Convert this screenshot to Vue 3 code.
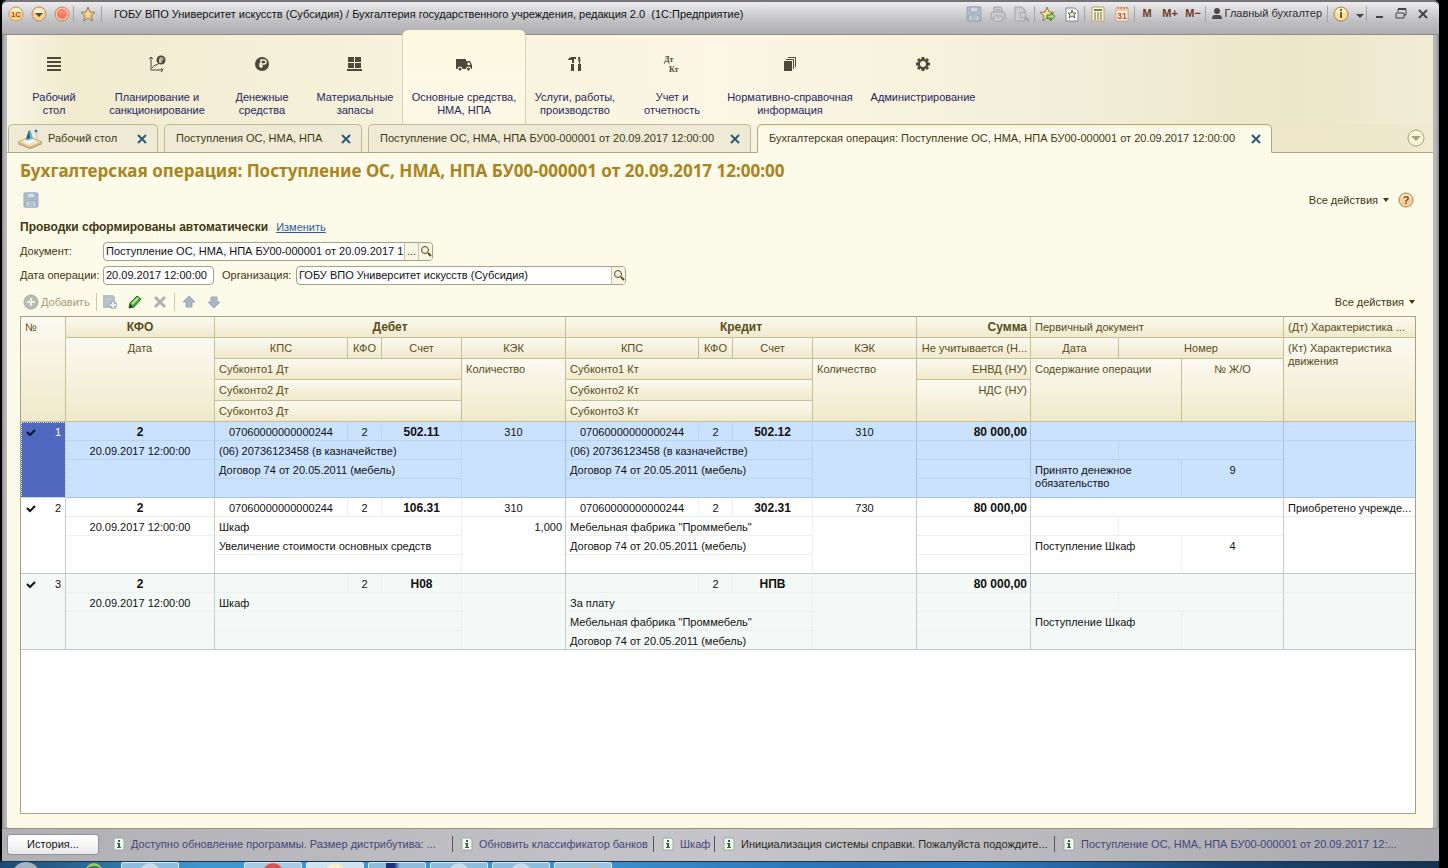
<script setup>
import { ref } from 'vue'

const sections = [
  { icon: 'desk', lines: ['Рабочий', 'стол'] },
  { icon: 'plan', lines: ['Планирование и', 'санкционирование'] },
  { icon: 'money', lines: ['Денежные', 'средства'] },
  { icon: 'stock', lines: ['Материальные', 'запасы'] },
  { icon: 'truck', lines: ['Основные средства,', 'НМА, НПА'], active: true },
  { icon: 'tools', lines: ['Услуги, работы,', 'производство'] },
  { icon: 'dtkt', lines: ['Учет и', 'отчетность'] },
  { icon: 'books', lines: ['Нормативно-справочная', 'информация'] },
  { icon: 'gear', lines: ['Администрирование'] }
]

const tabs = [
  { cls: 'tab-home', text: 'Рабочий стол', home: true },
  { cls: 'tab-list', text: 'Поступления ОС, НМА, НПА' },
  { cls: 'tab-doc', text: 'Поступление ОС, НМА, НПА БУ00-000001 от 20.09.2017 12:00:00' },
  { cls: 'tab-oper', text: 'Бухгалтерская операция: Поступление ОС, НМА, НПА БУ00-000001 от 20.09.2017 12:00:00', active: true }
]

const docName = ref('Поступление ОС, НМА, НПА БУ00-000001 от 20.09.2017 1')
const docDate = ref('20.09.2017 12:00:00')
const org = ref('ГОБУ ВПО Университет искусств (Субсидия)')

const rows = [
  {
    n: 1, selected: true, date: '20.09.2017 12:00:00', sum: '80 000,00',
    dt: { kps: '07060000000000244', kfo: '2', acc: '502.11', kek: '310', qty: '', sub: ['(06) 20736123458 (в казначействе)', 'Договор 74 от 20.05.2011 (мебель)', ''] },
    kt: { kps: '07060000000000244', kfo: '2', acc: '502.12', kek: '310', qty: '', sub: ['(06) 20736123458 (в казначействе)', 'Договор 74 от 20.05.2011 (мебель)', ''] },
    text: 'Принято денежное обязательство', jo: '9', feature: ''
  },
  {
    n: 2, date: '20.09.2017 12:00:00', sum: '80 000,00',
    dt: { kps: '07060000000000244', kfo: '2', acc: '106.31', kek: '310', qty: '1,000', sub: ['Шкаф', 'Увеличение стоимости основных средств', ''] },
    kt: { kps: '07060000000000244', kfo: '2', acc: '302.31', kek: '730', qty: '', sub: ['Мебельная фабрика "Проммебель"', 'Договор 74 от 20.05.2011 (мебель)', ''] },
    text: 'Поступление Шкаф', jo: '4', feature: 'Приобретено учрежде...'
  },
  {
    n: 3, even: true, date: '20.09.2017 12:00:00', sum: '80 000,00',
    dt: { kps: '', kfo: '2', acc: 'Н08', kek: '', qty: '', sub: ['Шкаф', '', ''] },
    kt: { kps: '', kfo: '2', acc: 'НПВ', kek: '', qty: '', sub: ['За плату', 'Мебельная фабрика "Проммебель"', 'Договор 74 от 20.05.2011 (мебель)'] },
    text: 'Поступление Шкаф', jo: '', feature: ''
  }
]

const notes = [
  { cls: 'note-long', text: 'Доступно обновление программы. Размер дистрибутива: ...' },
  { cls: 'note-bank', text: 'Обновить классификатор банков' },
  { cls: 'note-item', text: 'Шкаф' },
  { cls: 'note-help', text: 'Инициализация системы справки. Пожалуйста подождите...', dark: true },
  { cls: 'note-last', text: 'Поступление ОС, НМА, НПА БУ00-000001 от 20.09.2017 12:...' }
]
</script>

<template>
  <div class="screen">
    <div class="window">
      <header class="titlebar">
        <button class="tb w23" aria-label="Главное меню">
          <svg width="16" height="16" viewBox="0 0 16 16"><circle cx="8" cy="8" r="7" fill="#fbd98a" stroke="#c79a6c" /><ellipse cx="8" cy="5" rx="5" ry="3" fill="#fff3c4" /><text x="8" y="11" text-anchor="middle" class="logo-text">1С</text></svg>
        </button>
        <button class="tb w23" aria-label="Меню">
          <svg width="16" height="16" viewBox="0 0 16 16"><circle cx="8" cy="8" r="7" fill="#f3cf94" stroke="#b98f63" /><ellipse cx="8" cy="5" rx="5" ry="3" fill="#fdeccb" /><path d="M4 7h8l-4 4z" fill="#5c4a35" /></svg>
        </button>
        <button class="tb w23" aria-label="Закрыть">
          <svg width="16" height="16" viewBox="0 0 16 16"><circle cx="8" cy="8" r="7" fill="#f9c7a5" stroke="#b98672" /><circle cx="8" cy="8" r="5" fill="#f2795b" /><ellipse cx="8" cy="6" rx="4" ry="2" fill="#f59075" /></svg>
        </button>
        <i class="sep"></i>
        <button class="tb w26" aria-label="Избранное">
          <svg width="16" height="16" viewBox="0 0 16 16"><path d="M8 1l2 5 5 .4-4 3.4 1.400 5.200L8 12l-4.400 3L5 9.800 1 6.400 6 6z" fill="#fbd58b" stroke="#8d7a5c" /></svg>
        </button>
        <i class="sep"></i>
        <h1 class="app-title">ГОБУ ВПО Университет искусств (Субсидия) / Бухгалтерия государственного учреждения, редакция 2.0&nbsp; (1С:Предприятие)</h1>
        <div class="tb-right">
          <button class="tb" aria-label="Сохранить">
            <svg width="16" height="16" viewBox="0 0 16 16"><path d="M1 1h14v14H1z" fill="#b5bfcb" stroke="#97a3b1" /><path d="M4 1h8v5H4zM3 9h10v6H3z" fill="#d0d7dd" stroke="#94a1af" /><path d="M5 11h6M5 13h6" stroke="#94a1af" /></svg>
          </button>
          <button class="tb" aria-label="Печать">
            <svg width="16" height="16" viewBox="0 0 16 16" stroke="#a3a3a6" fill="#cbcbcd"><path d="M4 7V1h7l1 2v4" /><path d="M2 6h12l1 2v5H1V8z" /><path d="M4 10h8v5H4z" fill="#dadadc" /><path d="M6 4h4M6 12h4" /></svg>
          </button>
          <button class="tb" aria-label="Предварительный просмотр">
            <svg width="16" height="16" viewBox="0 0 16 16" stroke="#a2a2a9" fill="#cccccf"><path d="M1 1h7l3 3v11H1z" /><circle cx="9" cy="9" r="3" /><path d="M11 11l4 4" stroke-width="2" /></svg>
          </button>
          <i class="sep"></i>
          <button class="tb" aria-label="Добавить в избранное">
            <svg width="16" height="16" viewBox="0 0 16 16"><path d="M7 1l2 5 5 .4-4 3.400 1 5.200L7 12l-4 3 1-5.200L0 6.400 5 6z" fill="#fbe28b" stroke="#8b7a55" /><path d="M7 9h4V7l4 3.500L11 14v-2H7z" fill="#b5e07a" stroke="#3d7a24" /></svg>
          </button>
          <button class="tb" aria-label="Избранные страницы">
            <svg width="14" height="16" viewBox="0 0 14 16"><path d="M1 2h9l3 3v10H1z" fill="#fff" stroke="#7d8490" /><path d="M7 4l1 3h3l-2 2 1 3-3-2-3 2 1-3-2-2h3z" fill="#e8efc0" stroke="#5d6a4c" /></svg>
          </button>
          <i class="sep"></i>
          <button class="tb" aria-label="Калькулятор">
            <svg width="14" height="16" viewBox="0 0 14 16"><path d="M1 1h12v14H1z" fill="#fdf8dc" stroke="#bf9f6c" /><path d="M3 4h8" stroke="#6d8a4a" stroke-width="2" /><path d="M3 7h8M3 9h8M3 11h8M3 13h8" stroke="#66603c" stroke-dasharray="2 1" /></svg>
          </button>
          <button class="tb" aria-label="Календарь">
            <svg width="14" height="16" viewBox="0 0 14 16"><path d="M1 2h12v13H1z" fill="#fff6e6" stroke="#c99d72" /><path d="M1 2h12v3H1z" fill="#f6c9a0" /><path d="M3 1v2M6 1v2M9 1v2M12 1v2" stroke="#c2603c" /><text x="7" y="13" text-anchor="middle" class="cal-text">31</text></svg>
          </button>
          <i class="sep"></i>
          <button class="tb mem">M</button>
          <button class="tb mem">M+</button>
          <button class="tb mem">M−</button>
          <i class="sep"></i>
          <button class="tb user">
            <svg width="10" height="12" viewBox="0 0 10 12" fill="#4b4b4f"><circle cx="5" cy="3" r="3" /><path d="M0 11q0-4 3-4h4q3 0 3 4z" /></svg>
            Главный бухгалтер
          </button>
          <i class="sep"></i>
          <button class="tb info" aria-label="Справка">
            <svg width="18" height="18" viewBox="0 0 18 18"><circle cx="9" cy="9" r="7" fill="#fbdf98" stroke="#a98045" /><ellipse cx="9" cy="6" rx="5" ry="3" fill="#fff4cd" /><path d="M8 4h2v2H8zM8 7h2v6H8z" fill="#7a5a20" /></svg>
          </button>
          <button class="tb arrow" aria-label="Ещё"><svg width="8" height="10" viewBox="0 0 8 10"><path d="M0 5h8L4 9z" fill="#444" /></svg></button>
          <i class="sep"></i>
          <button class="tb win" aria-label="Свернуть"><svg width="12" height="12" viewBox="0 0 12 12"><path d="M3 9h7" stroke="#444" stroke-width="2" /></svg></button>
          <button class="tb win" aria-label="Восстановить"><svg width="12" height="12" viewBox="0 0 12 12" fill="none" stroke="#444"><path d="M3 4V1h8v6H9" /><path d="M3 1h8" stroke-width="2" /><path d="M1 5h8v5H1z" /></svg></button>
          <button class="tb win" aria-label="Закрыть окно"><svg width="12" height="12" viewBox="0 0 12 12"><path d="M2 2l8 8M10 2l-8 8" stroke="#444" stroke-width="2" /></svg></button>
        </div>
      </header>

      <main class="client">
        <nav class="sections">
          <button v-for="s in sections" :key="s.icon" class="section" :class="{ active: s.active }">
            <svg class="sec-icon" width="18" height="18" viewBox="0 0 18 18" fill="#4d483a">
              <path v-if="s.icon === 'desk'" d="M2 2h14v2H2zM2 6h14v2H2zM2 10h14v2H2zM2 14h14v2H2z" />
              <g v-else-if="s.icon === 'plan'">
                <path d="M3 2v13h12M1 4l2-2 2 2M13 13l2 2-2 2M4 13l3-3h2l3-3" fill="none" stroke="#4d483a" />
                <circle cx="13" cy="5" r="4.500" /><path d="M12 8V3h2q1 0 1 1t-1 1h-3M11 7h3" fill="none" stroke="#f3eed6" />
              </g>
              <g v-else-if="s.icon === 'money'"><circle cx="9" cy="9" r="7" /><path d="M8 13V5h3q2 0 2 2t-2 2H6M6 11h4" fill="none" stroke="#f5f0da" stroke-width="1.500" /></g>
              <path v-else-if="s.icon === 'stock'" d="M2 2h6v5H2zM9 2h6v5H9zM2 8h6v5H2zM9 8h6v5H9zM1 14h15v2H1z" />
              <g v-else-if="s.icon === 'truck'"><path d="M1 4h10v10H1zM11 6h4l2 4v4h-6z" /><path d="M12.500 7.500h2l1 2.500h-3z" fill="#fbf9e3" /><circle cx="5" cy="14" r="2.500" fill="#fbf9e3" /><circle cx="13.500" cy="14" r="2.500" fill="#fbf9e3" /><circle cx="5" cy="14" r="1.500" /><circle cx="13.500" cy="14" r="1.500" /></g>
              <path v-else-if="s.icon === 'tools'" d="M2 5q1-3 4-3h4v2H8v4H6V5zM5 9h3v7H5zM12 2h2l.500 4-.5 1v2h1v7h-3V9h1V7l-.5-1z" />
              <g v-else-if="s.icon === 'dtkt'" class="dtkt"><text x="1" y="7">Дт</text><text x="6" y="17">Кт</text></g>
              <g v-else-if="s.icon === 'books'"><path d="M3 6h8v10H3z" /><path d="M5 4.500h7.500V14M7 2.500h7.500V12" fill="none" stroke="#4d483a" /></g>
              <g v-else><circle cx="9" cy="9" r="4.200" fill="none" stroke="#4d483a" stroke-width="2.500" /><path d="M9 2v2M9 14v2M2 9h2M14 9h2M4 4l1.400 1.400M12.600 12.600L14 14M14 4l-1.400 1.400M4 14l1.400-1.400" stroke="#4d483a" stroke-width="3" /></g>
            </svg>
            <span class="sec-label"><span v-for="l in s.lines" :key="l">{{ l }}</span></span>
          </button>
        </nav>

        <div class="tabs">
          <div v-for="t in tabs" :key="t.cls" class="tab" :class="[t.cls, { active: t.active }]">
            <svg v-if="t.home" class="home-icon" width="26" height="22" viewBox="0 0 26 22"><path d="M1 14l12-5 12 5-12 5z" fill="#f7e3b8" stroke="#cfa872" /><path d="M1 15l12 5 12-5v1l-12 5-12-5z" fill="#a8804c" /><path d="M6 13l7-3 6 3-7 3z" fill="#fff" /><path d="M12 2l2 1 2 8-7 2z" fill="#6fb4cf" /><path d="M12 2l-3 9 4-1z" fill="#1d5d83" /><path d="M20 4v8" stroke="#b9c7cc" /><circle cx="19" cy="3" r="1.500" fill="#3c7ca5" /></svg>
            <a href="#" class="tab-text">{{ t.text }}</a>
            <button class="tab-close" aria-label="Закрыть вкладку"><svg width="12" height="12" viewBox="0 0 12 12"><path d="M2 2l8 8M10 2l-8 8" stroke="#2b5a78" stroke-width="2" /></svg></button>
          </div>
          <i class="tab-rest"></i>
          <button class="tabs-more" aria-label="Список вкладок"><svg width="20" height="20" viewBox="0 0 20 20"><circle cx="10" cy="10" r="8" fill="#f8f3dc" stroke="#aaa67c" /><path d="M5 8h10l-5 5z" fill="#a5a178" /></svg></button>
        </div>

        <section class="form">
          <h2 class="form-title">Бухгалтерская операция: Поступление ОС, НМА, НПА БУ00-000001 от 20.09.2017 12:00:00</h2>

          <div class="commands">
            <button class="flat" aria-label="Записать"><svg width="16" height="16" viewBox="0 0 16 16"><path d="M1 1h14v14H1z" fill="#aebccd" stroke="#9aabc0" /><path d="M4 1h8v5H4zM3 9h10v6H3z" fill="#d5dde6" stroke="#93a5bb" /><path d="M5 11h6M5 13h6" stroke="#93a5bb" /></svg></button>
            <span class="grow"></span>
            <button class="flat all-actions">Все действия <i class="caret"></i></button>
            <button class="flat help" aria-label="Помощь"><svg width="16" height="16" viewBox="0 0 16 16"><circle cx="8" cy="8" r="7" fill="#f8cf98" stroke="#ad8557" /><ellipse cx="8" cy="5" rx="5" ry="3" fill="#fce6c4" /><text x="8" y="12" text-anchor="middle" class="help-text">?</text></svg></button>
          </div>

          <div class="auto-row"><strong>Проводки сформированы автоматически</strong><a href="#">Изменить</a></div>

          <div class="field-row">
            <label class="first" for="doc">Документ:</label>
            <div class="box wide">
              <input id="doc" v-model="docName" type="text">
              <button aria-label="Выбрать">...</button>
              <button aria-label="Открыть"><svg width="12" height="12" viewBox="0 0 12 12"><circle cx="5" cy="5" r="3.500" fill="#eef0e2" stroke="#5a4a20" /><path d="M8 8l3 3" stroke="#5a4a20" stroke-width="2" /></svg></button>
            </div>
          </div>
          <div class="field-row">
            <label class="first" for="date">Дата операции:</label>
            <div class="box date"><input id="date" v-model="docDate" type="text"></div>
            <label class="second" for="org">Организация:</label>
            <div class="box wide">
              <input id="org" v-model="org" type="text">
              <button aria-label="Открыть организацию"><svg width="12" height="12" viewBox="0 0 12 12"><circle cx="5" cy="5" r="3.500" fill="#eef0e2" stroke="#5a4a20" /><path d="M8 8l3 3" stroke="#5a4a20" stroke-width="2" /></svg></button>
            </div>
          </div>

          <div class="toolbar">
            <button class="flat add"><svg width="16" height="16" viewBox="0 0 16 16"><circle cx="8" cy="8" r="7" fill="#b9bcb2" stroke="#a9aca3" /><path d="M8 4v8M4 8h8" stroke="#eceee6" stroke-width="2" /></svg>Добавить</button>
            <i class="tsep"></i>
            <button class="flat" aria-label="Скопировать"><svg width="16" height="16" viewBox="0 0 16 16"><path d="M1 1h10l2 2v11H1z" fill="#b7c0c9" /><path d="M3 5h7M3 8h5" stroke="#c6ced4" /><circle cx="11" cy="11" r="4" fill="#a9b6bd" /><path d="M11 8v6M8 11h6" stroke="#e9edec" stroke-width="2" /></svg></button>
            <button class="flat" aria-label="Изменить строку"><svg width="16" height="16" viewBox="0 0 16 16"><path d="M2 14l1-5 7-7 4 3-7 8z" fill="#4cae3a" stroke="#27741d" /><path d="M5 10l6-6" stroke="#b4ea9a" stroke-width="2" /><path d="M2 14l1-4 3 3z" fill="#2d3a22" /></svg></button>
            <button class="flat" aria-label="Удалить"><svg width="16" height="16" viewBox="0 0 16 16"><path d="M3 3l10 10M13 3L3 13" stroke="#b0b1b1" stroke-width="3" /></svg></button>
            <i class="tsep"></i>
            <button class="flat" aria-label="Вверх"><svg width="16" height="16" viewBox="0 0 16 16"><path d="M8 2l6 6h-3v5H5V8H2z" fill="#a9b5c3" stroke="#98a6b7" /></svg></button>
            <button class="flat" aria-label="Вниз"><svg width="16" height="16" viewBox="0 0 16 16"><path d="M8 14l6-6h-3V3H5v5H2z" fill="#a9b5c3" stroke="#98a6b7" /></svg></button>
            <span class="grow"></span>
            <button class="flat all-actions">Все действия <i class="caret"></i></button>
          </div>

          <div class="grid-panel">
            <table>
              <colgroup>
                <col class="c-num"><col class="c-date"><col class="c-kps"><col class="c-kfo"><col class="c-acc"><col class="c-kek"><col class="c-kps"><col class="c-kfo"><col class="c-acc"><col class="c-kek"><col class="c-sum"><col class="c-pd"><col class="c-pn"><col class="c-jo"><col class="c-feat">
              </colgroup>
              <thead>
                <tr>
                  <th rowspan="5" class="l">№</th><th class="b">КФО</th><th colspan="4" class="b">Дебет</th><th colspan="4" class="b">Кредит</th>
                  <th class="b r">Сумма</th><th colspan="3" class="l">Первичный документ</th><th class="l edge">(Дт) Характеристика ...</th>
                </tr>
                <tr>
                  <th rowspan="4">Дата</th><th>КПС</th><th>КФО</th><th>Счет</th><th>КЭК</th><th>КПС</th><th>КФО</th><th>Счет</th><th>КЭК</th>
                  <th class="r">Не учитывается (Н...</th><th>Дата</th><th colspan="2">Номер</th><th rowspan="4" class="l wrap edge">(Кт) Характеристика движения</th>
                </tr>
                <tr>
                  <th colspan="3" class="l">Субконто1 Дт</th><th rowspan="3" class="l">Количество</th><th colspan="3" class="l">Субконто1 Кт</th><th rowspan="3" class="l">Количество</th>
                  <th class="r">ЕНВД (НУ)</th><th colspan="2" rowspan="3" class="l">Содержание операции</th><th rowspan="3">№ Ж/О</th>
                </tr>
                <tr><th colspan="3" class="l">Субконто2 Дт</th><th colspan="3" class="l">Субконто2 Кт</th><th rowspan="2" class="r">НДС (НУ)</th></tr>
                <tr><th colspan="3" class="l">Субконто3 Дт</th><th colspan="3" class="l">Субконто3 Кт</th></tr>
              </thead>
              <tbody v-for="r in rows" :key="r.n" :class="{ selected: r.selected, even: r.even }">
                <tr>
                  <td rowspan="4" class="num major end">
                    <div><svg width="10" height="10" viewBox="0 0 10 10"><path d="M1 4l3 3 5-5" fill="none" stroke="currentColor" stroke-width="2" /></svg><span>{{ r.n }}</span></div>
                  </td>
                  <td class="b major">2</td>
                  <td>{{ r.dt.kps }}</td><td>{{ r.dt.kfo }}</td><td class="b">{{ r.dt.acc }}</td><td class="major">{{ r.dt.kek }}</td>
                  <td>{{ r.kt.kps }}</td><td>{{ r.kt.kfo }}</td><td class="b">{{ r.kt.acc }}</td><td class="major">{{ r.kt.kek }}</td>
                  <td class="b r major">{{ r.sum }}</td><td colspan="3" class="major"></td><td class="l edge">{{ r.feature }}</td>
                </tr>
                <tr>
                  <td class="major">{{ r.date }}</td>
                  <td colspan="3" class="l">{{ r.dt.sub[0] }}</td><td rowspan="3" class="r major end">{{ r.dt.qty }}</td>
                  <td colspan="3" class="l">{{ r.kt.sub[0] }}</td><td rowspan="3" class="r major end">{{ r.kt.qty }}</td>
                  <td class="major"></td><td></td><td colspan="2" class="major"></td><td rowspan="3" class="end edge"></td>
                </tr>
                <tr>
                  <td rowspan="2" class="major end"></td><td colspan="3" class="l">{{ r.dt.sub[1] }}</td><td colspan="3" class="l">{{ r.kt.sub[1] }}</td>
                  <td class="major"></td><td colspan="2" rowspan="2" class="l wrap end"><span class="narrow">{{ r.text }}</span></td><td rowspan="2" class="major end">{{ r.jo }}</td>
                </tr>
                <tr><td colspan="3" class="l end">{{ r.dt.sub[2] }}</td><td colspan="3" class="l end">{{ r.kt.sub[2] }}</td><td class="major end"></td></tr>
              </tbody>
            </table>
          </div>
        </section>
      </main>

      <footer class="status">
        <button class="history">История...</button>
        <a v-for="n in notes" :key="n.cls" href="#" class="note" :class="[n.cls, { dark: n.dark }]">
          <svg width="12" height="14" viewBox="0 0 12 14"><path d="M1 1h8l2 2v10H1z" fill="#f4faf2" stroke="#9aab9f" /><path d="M5 3h2v2H5zM4 6h3v4h1v1H4v-1h1V7H4z" fill="#2d6a35" /></svg>
          <span>{{ n.text }}</span>
        </a>
      </footer>
    </div>

    <div class="taskbar">
      <i class="orb"></i><i class="leaf"></i>
      <i class="task first-task"></i><i class="task red"></i><i class="task white"></i><i class="task navy"></i><i class="task plain"></i><i class="task paper"></i><i class="task gold"></i>
    </div>
  </div>
</template>

<style>
html, body { margin: 0; background: #000; }
</style>

<style scoped>
.screen { min-height: 100vh; display: flex; flex-direction: column; box-sizing: border-box; padding: 0 9px 0 2px; font: 11px/13px "Liberation Sans", Arial, sans-serif; color: #3f3812; overflow: hidden; }
.screen *, .screen *::before { box-sizing: border-box; }
button { font: inherit; color: inherit; background: none; border: 0; padding: 0; margin: 0; }
a { text-decoration: none; color: inherit; }
svg { display: block; flex: none; }
.grow { flex: 1; }

.window { flex: 1; display: flex; flex-direction: column; padding: 0 6px 0 5px; background: linear-gradient(90deg, #8b8b8f 0, #b9b7b9 3px, #b4b3b6 50%, #b9b7b9 calc(100% - 3px), #85858a 100%); border-radius: 6px 6px 0 0; }
.titlebar { height: 35px; margin: 0 -6px 0 -5px; padding: 0 5px 9px 2px; display: flex; align-items: center; border-top: 2px solid #77757a; border-bottom: 1px solid #8d8c86; border-radius: 6px 6px 0 0; background: linear-gradient(#ececee, #d2d2d5 35%, #bdbdc0 65%, #afafb2); color: #222; }
.tb { width: 24px; height: 22px; display: flex; align-items: center; justify-content: center; flex: none; }
.tb.w23 { width: 23px; }
.tb.w26 { width: 26px; }
.sep { width: 1px; height: 16px; margin: 0 1px 0 0; background: #a5a5a9; flex: none; }
.app-title { margin: 0 0 0 11px; font-size: 11px; line-height: 16px; font-weight: 400; white-space: nowrap; color: #111; }
.tb-right { margin-left: auto; display: flex; align-items: center; color: #2f2f2f; }
.tb.mem { width: 23px; font-weight: 700; color: #6f3b22; }
.tb.user { width: auto; gap: 3px; padding: 0 5px; white-space: nowrap; }
.tb.info { width: 24px; }
.tb.arrow { width: 13px; }
.tb.win { width: 22px; }
.logo-text { font: 700 8px "Liberation Sans", sans-serif; fill: #d0321a; }
.cal-text { font: 700 9px "Liberation Sans", sans-serif; fill: #d04a22; }
.help-text { font: 700 11px "Liberation Sans", sans-serif; fill: #6c4a20; }

.client { flex: 1; display: flex; flex-direction: column; background: #fcfae8; border-radius: 2px; }
.sections { height: 89px; display: flex; padding-left: 3px; background: linear-gradient(90deg, #f8f5e4 0, #f1ebd0 4%, #f6f1da 25%, #fbf7e4 50%, #f3eed9 75%, #ece6c9 90%, #f1ecd5 100%); color: #27285f; }
.section { display: flex; flex-direction: column; align-items: center; justify-content: flex-start; padding-top: 20px; white-space: nowrap; flex: none; }
.section:nth-child(1) { width: 88px; }
.section:nth-child(2) { width: 118px; }
.section:nth-child(3) { width: 92px; }
.section:nth-child(4) { width: 94px; }
.section:nth-child(5) { width: 124px; }
.section:nth-child(6) { width: 98px; }
.section:nth-child(7) { width: 96px; }
.section:nth-child(8) { width: 140px; }
.section:nth-child(9) { width: 126px; }
.section.active { margin-top: -5px; padding-top: 25px; border: 1px solid #d8d3b6; border-bottom: 0; border-top: 0; border-radius: 6px 6px 0 0; background: linear-gradient(#fbfadf, #fcf8e6 70%, #fbf7e4); }
.sec-label { margin-top: 18px; display: flex; flex-direction: column; align-items: center; }
.dtkt { font: 700 8px "Liberation Serif", serif; }

.tabs { height: 29px; display: flex; align-items: stretch; padding-left: 1px; background: linear-gradient(90deg, #f7f2de 0, #f1ebd0 10%, #faf3de 50%, #f4e9cf 80%, #eee6c9 95%, #f1ead2 100%); }
.tabs::before { content: ""; width: 1px; margin-left: -1px; border-bottom: 1px solid #aca98a; }
.tab { display: flex; align-items: center; padding: 0 9px 0 11px; margin-right: 6px; border: 1px solid #bdb995; border-bottom-color: #aca98a; border-radius: 5px 5px 0 0; background: #eeead6; flex: none; position: relative; }
.tab:not(.active)::after { content: ""; position: absolute; right: -7px; bottom: -1px; width: 7px; height: 1px; background: #aca98a; }
.tab.active { background: linear-gradient(#fdeecb 0, #fcfae8 4px); border-color: #aca98a; border-bottom-color: #fcfae8; margin: 0; }
.tab-home { width: 150px; padding-left: 8px; }
.tab-list { width: 198px; }
.tab-doc { width: 383px; }
.tab-oper { width: 515px; }
.home-icon { margin-right: 5px; }
.tab-text { flex: 1; white-space: nowrap; }
.tab-close { flex: none; }
.tab-rest { flex: 1; border-bottom: 1px solid #aca98a; }
.tabs-more { width: 34px; display: flex; align-items: center; justify-content: center; border-bottom: 1px solid #aca98a; }

.form { flex: 1; display: flex; flex-direction: column; padding: 0 17px 14px 13px; }
.form-title { margin: 0; height: 36px; font: 700 17px/36px "Noto Sans", sans-serif; color: #a98420; white-space: nowrap; }
.commands { height: 22px; display: flex; align-items: center; padding-left: 3px; }
.flat { display: flex; align-items: center; justify-content: center; white-space: nowrap; }
.caret { margin-left: 5px; border: 3px solid transparent; border-top: 4px solid #3f3812; border-bottom: 0; }
.all-actions { padding-right: 1px; }
.help { margin: 0 2px 0 8px; }
.auto-row { margin-top: 4px; height: 24px; display: flex; align-items: center; gap: 8px; }
.auto-row strong { font-size: 12px; }
.auto-row a { color: #2c5c9e; text-decoration: underline; }
.field-row { height: 24px; display: flex; align-items: center; }
.first { width: 83px; white-space: nowrap; }
.second { width: 74px; margin-left: 8px; white-space: nowrap; }
.box { height: 19px; display: flex; border: 1px solid #a5a184; border-radius: 4px; background: #fff; overflow: hidden; }
.box.wide { width: 330px; }
.box.date { width: 111px; }
.box input { flex: 1; min-width: 0; border: 0; padding: 0 0 0 2px; background: none; font: inherit; color: #111; outline: 0; }
.box button { width: 14px; flex: none; display: flex; align-items: center; justify-content: center; border-left: 1px solid #c9c4a5; background: #f7f5e4; }
.toolbar { margin: 3px 0 2px; height: 24px; display: flex; align-items: center; padding-left: 3px; }
.toolbar .flat { min-width: 25px; }
.toolbar .add { color: #a39c79; gap: 2px; }
.tsep { width: 1px; height: 18px; margin: 0 1px 0 6px; background: #cfcaae; }
.tsep ~ .tsep { margin: 0 2px 0 1px; }

.grid-panel { flex: 1; border: 1px solid #a5a184; background: #fff; min-width: 0; }
table { width: 100%; table-layout: fixed; border-spacing: 0; }
.c-num { width: 45px; } .c-date { width: 149px; } .c-kps { width: 133px; } .c-kfo { width: 34px; } .c-acc { width: 80px; } .c-kek { width: 104px; }
.c-sum { width: 114px; } .c-pd { width: 88px; } .c-pn { width: 63px; } .c-jo { width: 102px; } .c-feat { width: 131px; }
th, td { padding: 4px 4px 0; vertical-align: top; text-align: center; white-space: nowrap; overflow: hidden; font-weight: 400; }
th { height: 21px; border-right: 1px solid #c5bf98; border-bottom: 1px solid #c5bf98; background: linear-gradient(#fbfaf1, #f0e9cb); color: #5a4c1b; }
td { height: 19px; border-right: 1px solid #eef0ee; border-bottom: 1px solid #eef0ee; color: #111; }
.l { text-align: left; }
.r { text-align: right; padding-right: 3px; }
.wrap { white-space: normal; }
.narrow { display: block; max-width: 120px; }
.b { font-weight: 700; font-size: 12px; }
td.major { border-right-color: #c3cac7; }
td.end { border-bottom-color: #bfc8c4; }
.even td { background: #f4f9f7; }
.selected td { background: #cbe2ff; border-right-color: #bbd4f0; border-bottom-color: #bbd4f0; }
.selected td.major { border-right-color: #a9c3de; }
.selected td.end { border-bottom-color: #a9c3de; }
.edge { border-right: 0; }
.num div { display: flex; align-items: center; justify-content: space-between; padding-left: 1px; }
.selected td.num { background: #5068c0; color: #fff; outline: 1px dotted #dfe8ff; outline-offset: -1px; }
.selected .num svg { color: #0c1430; }

.status { height: 33px; display: flex; align-items: center; margin: 0 -6px 0 -5px; padding: 0 0 2px 5px; border-top: 1px solid #93928a; background: linear-gradient(90deg, #b0afb3, #c6c5c9 50%, #a9a8ad); }
.history { width: 92px; height: 21px; border: 1px solid #939296; border-radius: 3px; background: linear-gradient(#fff, #f5f5f6 60%, #e6e6e8); color: #111; margin-right: 6px; }
.note { height: 16px; display: flex; align-items: center; gap: 6px; padding-left: 8px; color: #46467c; white-space: nowrap; border-right: 1px solid #55555a; overflow: hidden; }
.note.dark { color: #2c2a22; }
.note-long { width: 348px; }
.note-bank { width: 201px; }
.note-item { width: 61px; }
.note-help { width: 340px; }
.note-last { border-right: 0; }

.taskbar { height: 7px; margin: 0 0 0 -2px; display: flex; gap: 4px; overflow: hidden; border-top: 1px solid #17344f; background: linear-gradient(90deg, #1c4a72 0, #3e97cf 14%, #3a92cf 40%, #2a70b8 60%, #2c79c2 68%, #1c4675 85%, #15324f 100%); }
.orb { width: 28px; height: 28px; border-radius: 50%; margin-left: 12px; background: #a3b5c3; flex: none; }
.leaf { width: 18px; height: 20px; border-radius: 50%; margin: 1px 14px 0 41px; border-top: 3px solid #a7c94a; flex: none; }
.task { width: 58px; height: 14px; border: 1px solid #d5e9f6; border-radius: 2px; background: radial-gradient(circle at 50% 90%, #c7dcea 0 10px, #8dbedd 11px); flex: none; }
.first-task { margin-right: 61px; }
.red { background: radial-gradient(circle at 50% 90%, #d85350 0 10px, #a6cbe2 11px); }
.white { background: radial-gradient(circle at 50% 90%, #f4efcf 0 10px, #cfe4f0 11px); }
.navy { background: linear-gradient(90deg, #8fbcd9 30%, #1e2f7c 31% 45%, #8fbcd9 55%); }
.gold { background: radial-gradient(circle at 70% 90%, #d8b873 0 7px, #9bc4de 8px); }
</style>
